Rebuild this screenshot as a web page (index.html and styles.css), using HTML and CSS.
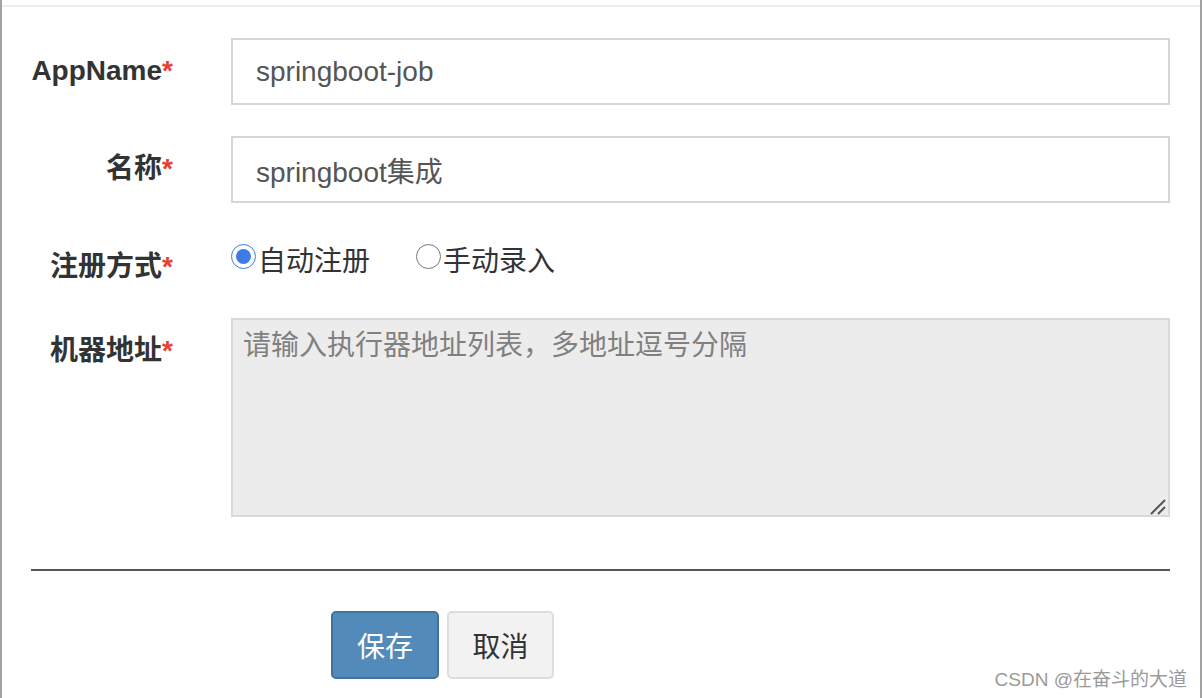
FILE: index.html
```html
<!DOCTYPE html>
<html lang="zh-CN">
<head>
<meta charset="utf-8">
<title>执行器</title>
<link rel="stylesheet" href="styles.css">
</head>
<body>
<div class="modal">
  <div class="modal-header"></div>
  <div class="modal-body">
    <form class="form">
      <div class="row row-input">
        <label class="label">AppName<span class="req">*</span></label>
        <div class="field"><input class="input" type="text" value="springboot-job"></div>
      </div>
      <div class="row row-input">
        <label class="label">名称<span class="req">*</span></label>
        <div class="field"><input class="input" type="text" value="springboot集成"></div>
      </div>
      <div class="row row-radio">
        <label class="label">注册方式<span class="req">*</span></label>
        <div class="field radios">
          <label class="radio"><input type="radio" name="type" checked>自动注册</label>
          <label class="radio"><input type="radio" name="type">手动录入</label>
        </div>
      </div>
      <div class="row row-area">
        <label class="label">机器地址<span class="req">*</span></label>
        <div class="field area-wrap">
          <textarea class="textarea" placeholder="请输入执行器地址列表，多地址逗号分隔" readonly></textarea>
          <svg class="grip" width="18" height="18" viewBox="0 0 18 18"><path d="M2 17 L16 3 M9 17 L16 10" stroke="#555" stroke-width="2" fill="none"/></svg>
        </div>
      </div>
      <hr class="divider">
      <div class="actions">
        <button type="button" class="btn btn-primary">保存</button>
        <button type="button" class="btn btn-default">取消</button>
      </div>
    </form>
  </div>
  <div class="watermark">CSDN @在奋斗的大道</div>
</div>
</body>
</html>
```

FILE: styles.css
```css
html, body {
  margin: 0;
  padding: 0;
  background: #fff;
}
body {
  width: 1202px;
  height: 698px;
  overflow: hidden;
  font-family: "Liberation Sans", Arial, "Noto Sans CJK SC", sans-serif;
  color: #333;
}
.modal {
  position: relative;
  box-sizing: border-box;
  width: 1202px;
  height: 698px;
  border-left: 2px solid #a3a3a3;
  border-right: 2px solid #a3a3a3;
  background: #fff;
}
.modal-header {
  height: 5px;
  border-bottom: 2px solid #eeeeee;
}
.modal-body {
  padding: 31px 30px 0 29px;
}
.form {
  margin: 0;
}
.row {
  display: flex;
  align-items: flex-start;
}
.row-input {
  margin-bottom: 31px;
}
.row-radio {
  height: 84px;
}
.label {
  box-sizing: border-box;
  width: 170px;
  flex: none;
  padding-right: 28px;
  padding-top: 14px;
  text-align: right;
  font-size: 28px;
  line-height: 38px;
  font-weight: bold;
  color: #333;
}
.req {
  color: #e8402f;
}
.field {
  flex: 1;
  padding-left: 30px;
}
.input {
  box-sizing: border-box;
  display: block;
  width: 100%;
  height: 67px;
  margin: 0;
  padding: 0 23px;
  border: 2px solid #d4d6da;
  border-radius: 0;
  background: #fff;
  font-family: "Liberation Sans", Arial, "Noto Sans CJK SC", sans-serif;
  font-size: 28px;
  color: #555;
  outline: none;
}
.radios {
  display: flex;
  padding-top: 6px;
}
.radio {
  display: flex;
  align-items: center;
  font-size: 28px;
  line-height: 38px;
  color: #333;
  margin-right: 46px;
  font-family: "Noto Sans CJK SC", sans-serif;
}
.radio input {
  width: 25px;
  height: 25px;
  margin: 0 2px 6px 0;
  accent-color: #3b7de4;
}
.area-wrap {
  position: relative;
}
.textarea {
  box-sizing: border-box;
  display: block;
  width: 100%;
  height: 199px;
  margin: 0;
  padding: 7px 10px;
  border: 2px solid #d9d9d9;
  border-radius: 0;
  background: #ececec;
  font-family: "Liberation Sans", Arial, "Noto Sans CJK SC", sans-serif;
  font-size: 28px;
  line-height: 38px;
  color: #555;
  outline: none;
  resize: none;
}
.textarea::placeholder {
  color: #808080;
}
.grip {
  position: absolute;
  right: 3px;
  bottom: 2px;
}
.divider {
  margin: 52px 0 0 0;
  border: 0;
  height: 2px;
  background: #555;
}
.actions {
  display: flex;
  gap: 8px;
  padding-left: 300px;
  margin-top: 40px;
}
.btn {
  box-sizing: border-box;
  height: 68px;
  margin: 0;
  padding: 0;
  border-radius: 5px;
  font-family: "Noto Sans CJK SC", sans-serif;
  font-size: 28px;
  line-height: 1;
  cursor: pointer;
}
.btn-primary {
  width: 108px;
  background: #528bb9;
  border: 2px solid #41739d;
  color: #fff;
}
.btn-default {
  width: 107px;
  background: #f2f2f2;
  border: 2px solid #dddddd;
  color: #333;
}
.watermark {
  position: absolute;
  right: 13px;
  bottom: 7px;
  font-size: 19px;
  color: #9a9a9a;
  font-family: "Liberation Sans", Arial, "Noto Sans CJK SC", sans-serif;
  white-space: nowrap;
}
```
